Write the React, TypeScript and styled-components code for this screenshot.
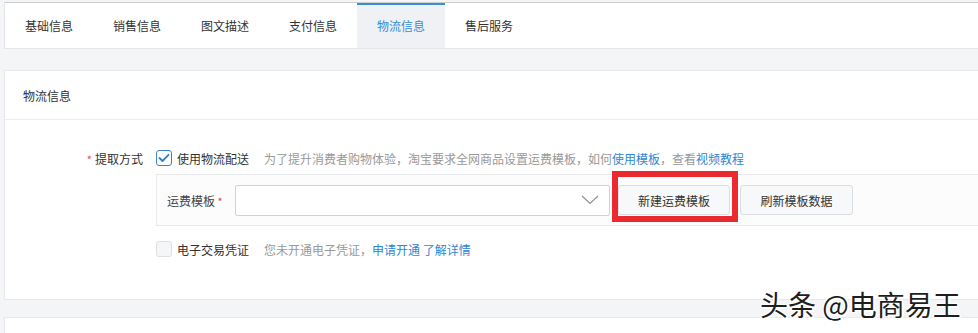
import styled, { createGlobalStyle } from 'styled-components';

const GlobalStyle = createGlobalStyle`
  html, body {
    margin: 0;
    padding: 0;
    background: #f4f5f7;
    overflow: hidden;
  }
  body {
    font-family: 'Noto Sans CJK SC', 'Noto Sans', sans-serif;
    font-size: 12px;
    color: #333;
  }
`;

const Page = styled.div`
  position: relative;
  width: 1000px;
  height: 333px;
  padding: 2px 0 0 4px;
  box-sizing: border-box;
  overflow: hidden;
`;

const TabBar = styled.nav`
  display: flex;
  height: 47px;
  background: #fff;
  border: 1px solid #e3e5e8;
  border-top-color: #cdcdcd;
  box-sizing: border-box;
`;

const Tab = styled.div<{ $active?: boolean }>`
  width: 88px;
  display: flex;
  align-items: center;
  justify-content: center;
  box-sizing: border-box;
  border-top: 2px solid ${(p) => (p.$active ? '#3a8dd6' : 'transparent')};
  background: ${(p) => (p.$active ? '#eff1f4' : '#fff')};
  color: ${(p) => (p.$active ? '#3a8dd6' : '#333')};
  padding-bottom: 2px;
`;

const Panel = styled.section`
  margin-top: 21px;
  background: #fff;
  border: 1px solid #e6e8eb;
  height: 230px;
  box-sizing: border-box;
`;

const PanelHeader = styled.header`
  height: 48px;
  display: flex;
  align-items: center;
  padding-left: 18px;
  border-bottom: 1px solid #eceef1;
  color: #333;
`;

const Form = styled.div`
  padding-top: 27px;
  display: flex;
  flex-direction: column;
`;

const Row = styled.div`
  display: flex;
  align-items: center;
  height: 22px;
`;

const Label = styled.div`
  width: 138px;
  margin-right: 13px;
  text-align: right;
  white-space: nowrap;
`;

const Star = styled.span`
  color: #e5484d;
  margin-right: 3px;
  font-size: 11px;
`;

const Check = styled.span<{ $checked?: boolean }>`
  width: 16px;
  height: 16px;
  box-sizing: border-box;
  border-radius: 3px;
  border: 1px solid ${(p) => (p.$checked ? '#3e86c8' : '#dcdfe3')};
  background: ${(p) => (p.$checked ? '#fff' : '#f5f6f8')};
  display: inline-flex;
  align-items: center;
  justify-content: center;
  flex-shrink: 0;
`;

const CheckText = styled.span`
  margin-left: 5px;
  color: #333;
  white-space: nowrap;
`;

const Hint = styled.span`
  margin-left: 15px;
  color: #999;
  white-space: nowrap;
`;

const A = styled.span`
  color: #2f86d1;
`;

const SubBox = styled.div`
  margin: 5px 0 0 151px;
  height: 52px;
  box-sizing: border-box;
  border: 1px solid #e8eaed;
  border-right: none;
  background: #fcfcfd;
  display: flex;
  align-items: center;
  padding-left: 10px;
`;

const SubLabel = styled.span`
  width: 68px;
  white-space: nowrap;
  color: #444;
`;

const Select = styled.div`
  width: 375px;
  height: 31px;
  box-sizing: border-box;
  border: 1px solid #cfd2d6;
  border-radius: 2px;
  background: #fff;
  display: flex;
  align-items: center;
  justify-content: flex-end;
  padding-right: 10px;
`;

const ButtonWrap = styled.div<{ $gap: number }>`
  position: relative;
  margin-left: ${(p) => p.$gap}px;
`;

const Button = styled.button<{ $width: number }>`
  width: ${(p) => p.$width}px;
  height: 30px;
  box-sizing: border-box;
  border: 1px solid #d9dce0;
  border-radius: 3px;
  background: #f7f8fa;
  color: #333;
  font: inherit;
  cursor: pointer;
`;

const Mark = styled.div`
  position: absolute;
  left: -6px;
  top: -14px;
  right: -8px;
  bottom: -7px;
  border: 6px solid #ea2a30;
  pointer-events: none;
`;

const Row3 = styled(Row)`
  margin-top: 12px;
  padding-left: 151px;
`;

const Gap = styled.div`
  height: 17px;
`;

const LowerPanel = styled.section`
  background: #fff;
  border: 1px solid #e6e8eb;
  height: 40px;
`;

const Watermark = styled.div`
  position: absolute;
  left: 760px;
  top: 286px;
  font-size: 28px;
  line-height: 36px;
  color: #1e1e1e;
  white-space: nowrap;
  text-shadow: 1px 1px 0 #fff, -1px -1px 0 #fff, 1px -1px 0 #fff, -1px 1px 0 #fff,
    2px 2px 1px rgba(255, 255, 255, 0.9);
`;

const tabs = ['基础信息', '销售信息', '图文描述', '支付信息', '物流信息', '售后服务'];

const App = () => {
  return (
    <Page>
      <GlobalStyle />
      <TabBar>
        {tabs.map((t) => (
          <Tab key={t} $active={t === '物流信息'}>
            {t}
          </Tab>
        ))}
      </TabBar>
      <Panel>
        <PanelHeader>物流信息</PanelHeader>
        <Form>
          <Row>
            <Label>
              <Star>*</Star>提取方式
            </Label>
            <Check $checked>
              <svg width="12" height="10" viewBox="0 0 12 10">
                <path
                  d="M1.5 5 L4.5 8 L10.5 1.8"
                  fill="none"
                  stroke="#2f7fc6"
                  strokeWidth="1.8"
                  strokeLinecap="round"
                  strokeLinejoin="round"
                />
              </svg>
            </Check>
            <CheckText>使用物流配送</CheckText>
            <Hint>
              为了提升消费者购物体验，淘宝要求全网商品设置运费模板，如何<A>使用模板</A>，查看<A>视频教程</A>
            </Hint>
          </Row>
          <SubBox>
            <SubLabel>
              运费模板<Star> *</Star>
            </SubLabel>
            <Select>
              <svg width="18" height="10" viewBox="0 0 18 10">
                <path d="M1 1 L9 8.5 L17 1" fill="none" stroke="#8e9196" strokeWidth="1.2" />
              </svg>
            </Select>
            <ButtonWrap $gap={8}>
              <Button $width={112}>新建运费模板</Button>
              <Mark />
            </ButtonWrap>
            <ButtonWrap $gap={10}>
              <Button $width={113}>刷新模板数据</Button>
            </ButtonWrap>
          </SubBox>
          <Row3>
            <Check />
            <CheckText>电子交易凭证</CheckText>
            <Hint>
              您未开通电子凭证，<A>申请开通 了解详情</A>
            </Hint>
          </Row3>
        </Form>
      </Panel>
      <Gap />
      <LowerPanel />
      <Watermark>头条 @电商易王</Watermark>
    </Page>
  );
};

export default App;
